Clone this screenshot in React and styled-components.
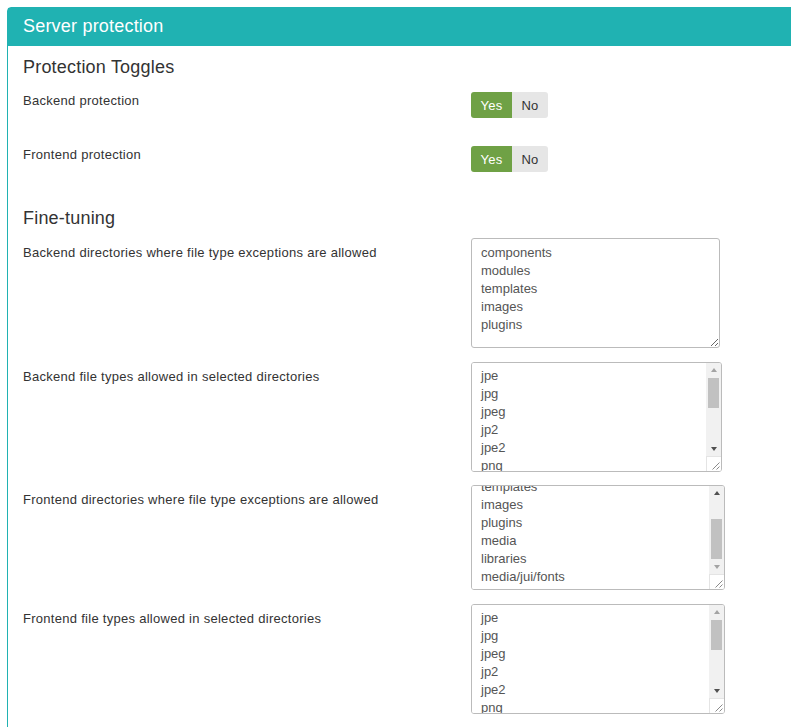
import React, { useEffect, useRef } from "react";
import styled, { createGlobalStyle } from "styled-components";

const Global = createGlobalStyle`
  html, body { margin: 0; padding: 0; background: #fff; overflow-x: hidden; }
  body { font-family: "Liberation Sans", Arial, sans-serif; }
`;

const DARK = "#505050";
const LIGHT = "#a3a3a3";

const Panel = styled.section`
  margin: 7px -40px 0 7px;
  border: 1px solid #20b2b2;
  border-radius: 4px 4px 0 0;
  min-height: 760px;
`;

const PanelHeader = styled.h2`
  margin: 0;
  background: #20b2b2;
  color: #fff;
  font-weight: normal;
  font-size: 18px;
  line-height: 37px;
  padding: 0 15px 1px;
  letter-spacing: 0.2px;
`;

const PanelBody = styled.div`
  padding: 0 15px;
`;

const SectionTitle = styled.h3`
  margin: ${(p) => p.$top}px 0 ${(p) => p.$bottom}px;
  font-size: 18px;
  line-height: 20px;
  font-weight: normal;
  color: #333;
  letter-spacing: 0.2px;
`;

const Row = styled.div`
  display: grid;
  grid-template-columns: 448px auto;
  align-items: start;
  margin-bottom: ${(p) => p.$gap}px;
`;

const Label = styled.label`
  font-size: 13px;
  line-height: 18px;
  color: #333;
  padding-top: ${(p) => p.$pad}px;
  letter-spacing: 0.28px;
`;

const Toggle = styled.div`
  display: inline-flex;
  height: 26px;
  border-radius: 3px;
  overflow: hidden;
`;

const ToggleButton = styled.span`
  display: flex;
  align-items: center;
  justify-content: center;
  width: ${(p) => p.$w}px;
  font-size: 13px;
  letter-spacing: 0.2px;
  background: ${(p) => (p.$active ? "#6fa145" : "#e6e6e6")};
  color: ${(p) => (p.$active ? "#fff" : "#333")};
`;

const Area = styled.textarea`
  box-sizing: border-box;
  display: block;
  width: ${(p) => p.$w}px;
  height: ${(p) => p.$h}px;
  margin: 0;
  padding: 5px 9px 3px;
  border: 1px solid #bbb;
  border-radius: 3px;
  font-family: "Liberation Sans", Arial, sans-serif;
  font-size: 13px;
  line-height: 18px;
  color: #555;
  background: #fff;
  outline: none;
  overflow: hidden;
`;

const Frame = styled.div`
  box-sizing: border-box;
  display: flex;
  width: ${(p) => p.$w}px;
  height: ${(p) => p.$h}px;
  border: 1px solid #bbb;
  border-radius: 3px;
  overflow: hidden;
  background: #fff;
`;

const InnerArea = styled(Area)`
  flex: 1;
  width: auto;
  height: 100%;
  padding: 4px 9px 3px;
  border: 0;
  border-radius: 0;
  resize: none;
`;

const ScrollBar = styled.div`
  display: flex;
  flex-direction: column;
  width: 15px;
  flex: none;
  background: #f1f1f1;
`;

const ScrollButton = styled.div`
  height: 15px;
  flex: none;
  display: flex;
  align-items: center;
  justify-content: center;
`;

const Arrow = styled.span`
  width: 0;
  height: 0;
  border-left: 3.5px solid transparent;
  border-right: 3.5px solid transparent;
  ${(p) =>
    p.$dir === "up"
      ? `border-bottom: 4px solid ${p.$color}; margin-top: -1px;`
      : `border-top: 4px solid ${p.$color}; margin-top: 1px;`}
`;

const Track = styled.div`
  flex: 1;
  display: flex;
  flex-direction: column;
  justify-content: ${(p) => (p.$at === "bottom" ? "flex-end" : "flex-start")};
`;

const Thumb = styled.div`
  height: ${(p) => p.$size}px;
  margin: 0 2px;
  background: #c1c1c1;
`;

const Corner = styled.div`
  height: 15px;
  flex: none;
  background: #fff;
  border-top: 1px solid #e4e4e4;
  border-left: 1px solid #e4e4e4;
  box-sizing: border-box;
  display: flex;
`;

function ScrollArea({ w, h, at, thumb, value }) {
  const ref = useRef(null);
  useEffect(() => {
    if (ref.current && at === "bottom") ref.current.scrollTop = ref.current.scrollHeight;
  }, [at]);
  return (
    <Frame $w={w} $h={h}>
      <InnerArea ref={ref} defaultValue={value} />
      <ScrollBar>
        <ScrollButton>
          <Arrow $dir="up" $color={at === "top" ? LIGHT : DARK} />
        </ScrollButton>
        <Track $at={at}>
          <Thumb $size={thumb} />
        </Track>
        <ScrollButton>
          <Arrow $dir="down" $color={at === "top" ? DARK : LIGHT} />
        </ScrollButton>
        <Corner>
          <svg width="14" height="14" viewBox="0 0 14 14">
            <path d="M12.5 5.5 L5.5 12.5 M12.5 9.5 L9.5 12.5" stroke="#8a8a8a" strokeWidth="1" fill="none" />
          </svg>
        </Corner>
      </ScrollBar>
    </Frame>
  );
}

const dirs = ["components", "modules", "templates", "images", "plugins"];
const frontDirs = [...dirs, "media", "libraries", "media/jui/fonts"];
const types = [
  "jpe", "jpg", "jpeg", "jp2", "jpe2", "png", "gif", "bmp", "css",
  "js", "swf", "html", "mpg", "mp3", "mpeg", "mp4",
];

function ToggleRow({ label }) {
  return (
    <Row $gap={28}>
      <Label $pad={0}>{label}</Label>
      <div>
        <Toggle>
          <ToggleButton $active $w={41}>Yes</ToggleButton>
          <ToggleButton $w={36}>No</ToggleButton>
        </Toggle>
      </div>
    </Row>
  );
}

export default function App() {
  return (
    <>
      <Global />
      <Panel>
        <PanelHeader>Server protection</PanelHeader>
        <PanelBody>
          <SectionTitle $top={11} $bottom={15}>Protection Toggles</SectionTitle>
          <ToggleRow label="Backend protection" />
          <ToggleRow label="Frontend protection" />
          <SectionTitle $top={36} $bottom={10}>Fine-tuning</SectionTitle>
          <Row $gap={14}>
            <Label $pad={6}>Backend directories where file type exceptions are allowed</Label>
            <Area $w={249} $h={110} defaultValue={dirs.join("\n")} />
          </Row>
          <Row $gap={13}>
            <Label $pad={6}>Backend file types allowed in selected directories</Label>
            <ScrollArea w={251} h={110} at="top" thumb={30} value={types.join("\n")} />
          </Row>
          <Row $gap={14}>
            <Label $pad={6}>Frontend directories where file type exceptions are allowed</Label>
            <ScrollArea w={254} h={105} at="bottom" thumb={40} value={frontDirs.join("\n")} />
          </Row>
          <Row $gap={14}>
            <Label $pad={6}>Frontend file types allowed in selected directories</Label>
            <ScrollArea w={254} h={110} at="top" thumb={30} value={types.join("\n")} />
          </Row>
        </PanelBody>
      </Panel>
    </>
  );
}
